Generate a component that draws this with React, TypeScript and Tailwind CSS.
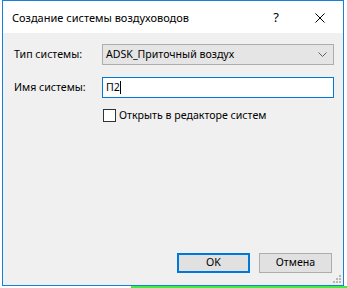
import React from 'react';

const font = { fontFamily: '"Noto Sans", "Open Sans", sans-serif' };

export default function App() {
  return (
    <div className="w-[347px] h-[288px] bg-white overflow-hidden text-[10.6px] text-black" style={font}>
      <div className="ml-[2px] w-[342px] h-[286px] border border-[#1a7fd6] flex flex-col">
        {/* title bar */}
        <div className="h-[32px] bg-white flex items-center shrink-0">
          <span className="pl-[9px] pt-[3px] text-[11px] flex-1">Создание системы воздуховодов</span>
          <span className="w-[12px] text-center text-[13px] pt-[2px] mr-[33px]">?</span>
          <svg width="10" height="10" viewBox="0 0 10 10" className="mr-[18px] mt-[2px]">
            <path d="M0.5 0.5 L9.5 9.5 M9.5 0.5 L0.5 9.5" stroke="#000" strokeWidth="1" />
          </svg>
        </div>

        {/* body */}
        <div className="flex-1 bg-[#f0f0f0] flex flex-col relative">
          <div className="flex items-center mt-[11px] h-[21px]">
            <span className="pl-[11px] w-[99px]">Тип системы:</span>
            <div className="w-[232px] h-[21px] bg-[#e5e5e5] border border-[#adadad] flex items-center justify-between pl-[3px] pr-[6px]">
              <span>ADSK_Приточный воздух</span>
              <svg width="9" height="5" viewBox="0 0 9 5">
                <path d="M0.5 0.5 L4.5 4.5 L8.5 0.5" stroke="#606060" fill="none" strokeWidth="1" />
              </svg>
            </div>
          </div>

          <div className="flex items-center mt-[12px] h-[21px]">
            <span className="pl-[11px] w-[99px]">Имя системы:</span>
            <div className="w-[232px] h-[21px] bg-white border border-[#0078d7] flex items-center pl-[3px]">
              <span>П2</span>
              <span className="w-px h-[13px] bg-black" />
            </div>
          </div>

          <div className="flex items-center mt-[10px] ml-[100px]">
            <span className="w-[13px] h-[13px] border border-[#333] bg-white" />
            <span className="ml-[3px]">Открыть в редакторе систем</span>
          </div>

          <div className="flex-1" />

          <div className="flex justify-end gap-[9px] pr-[11px] mb-[12px]">
            <button className="w-[73px] h-[20px] bg-[#e1e1e1] border-2 border-[#0078d7] flex items-center justify-center">
              OK
            </button>
            <button className="w-[73px] h-[20px] bg-[#e1e1e1] border border-[#adadad] flex items-center justify-center">
              Отмена
            </button>
          </div>

          {/* size grip */}
          <svg width="8" height="8" viewBox="0 0 8 8" className="absolute right-[2px] bottom-[2px]">
            <rect x="6" y="0" width="2" height="2" fill="#b8b8b8" />
            <rect x="3" y="3" width="2" height="2" fill="#b8b8b8" />
            <rect x="6" y="3" width="2" height="2" fill="#b8b8b8" />
            <rect x="0" y="6" width="2" height="2" fill="#b8b8b8" />
            <rect x="3" y="6" width="2" height="2" fill="#b8b8b8" />
            <rect x="6" y="6" width="2" height="2" fill="#b8b8b8" />
          </svg>
        </div>
      </div>
      <div className="flex h-[2px]">
        <div className="w-[131px]" />
        <div className="flex-1 bg-[#3cf03c]" />
      </div>
    </div>
  );
}
